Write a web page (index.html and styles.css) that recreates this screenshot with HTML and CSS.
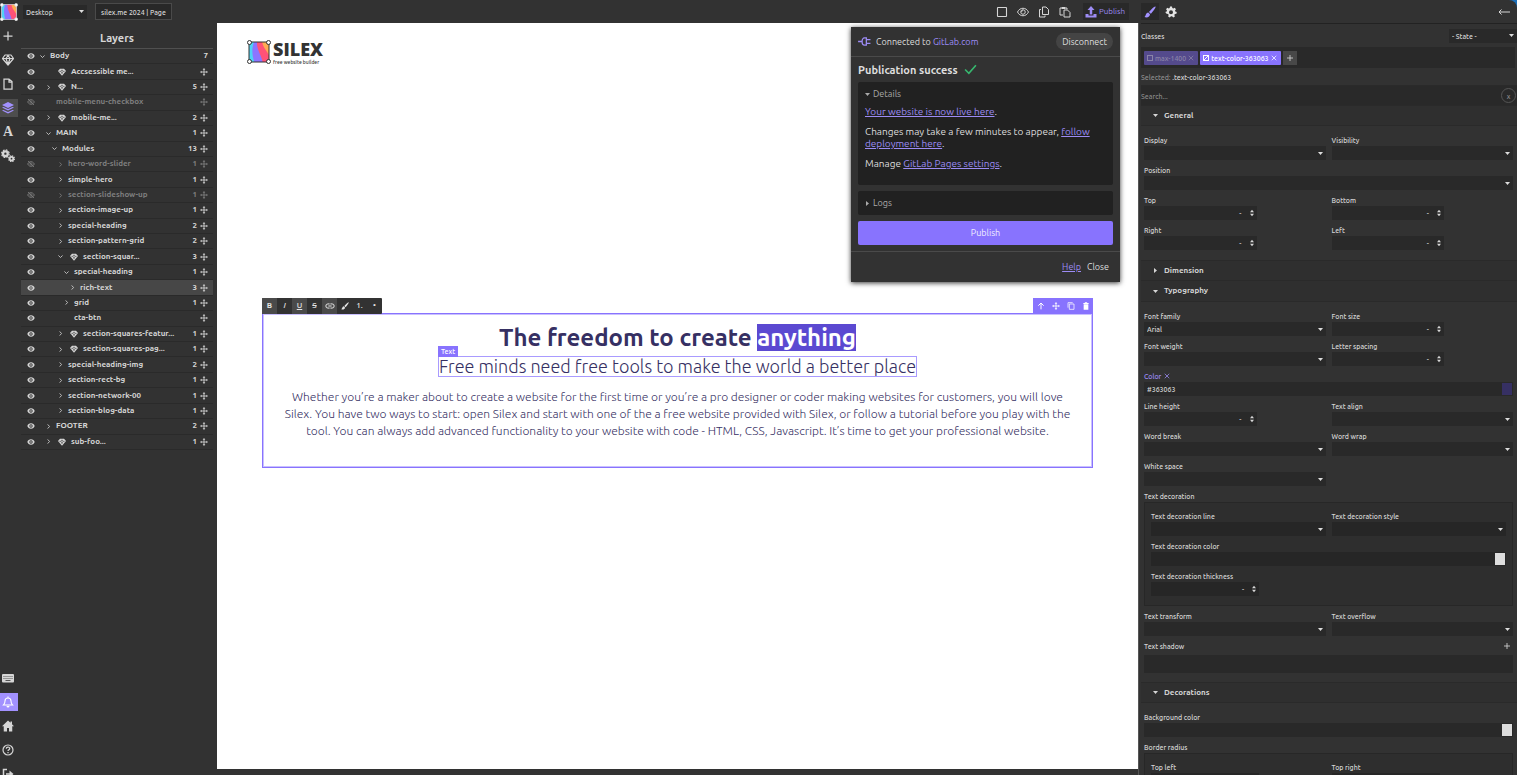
FILE: index.html
```html
<!DOCTYPE html>
<html lang="en">
<head>
<meta charset="utf-8">
<title>silex.me 2024 | Page</title>
<link rel="stylesheet" href="styles.css">
</head>
<body>
<svg class="defs" aria-hidden="true">
  <defs>
    <clipPath id="sq"><rect x="2" y="2" width="20" height="20"/></clipPath>
    <symbol id="logo" viewBox="0 0 24 24">
      <g clip-path="url(#sq)">
        <rect width="24" height="24" fill="#8c74ff"/>
        <path d="M0 0h8C4 7 5 17 8 24H0z" fill="#4fd3f5"/>
        <path d="M10 0h14v24h-8C15 15 9 10 10 0z" fill="#ff5277"/>
        <path d="M15 0h9v20C22 12 15 8 15 0z" fill="#ffab52"/>
      </g>
      <g fill="none" stroke="currentColor" stroke-width="1"><rect x="2" y="2" width="20" height="20"/></g>
      <g fill="#fff" stroke="currentColor" stroke-width="1"><circle cx="2.500" cy="2.500" r="2"/><circle cx="21.500" cy="2.500" r="2"/><circle cx="2.500" cy="21.500" r="2"/><circle cx="21.500" cy="21.500" r="2"/></g>
    </symbol>
    <symbol id="eye" viewBox="0 0 24 24"><path fill-rule="evenodd" d="M12 4C6.500 4 2.500 7.500 1 12c1.500 4.500 5.500 8 11 8s9.500-3.500 11-8c-1.500-4.500-5.500-8-11-8zm0 13a5 5 0 1 1 0-10 5 5 0 0 1 0 10zm0-2.500a2.500 2.500 0 1 0 0-5 2.500 2.500 0 0 0 0 5z" fill="currentColor"/></symbol>
    <symbol id="eyeoff" viewBox="0 0 24 24"><path d="M2 12c2-4.500 6-7 10-7s8 2.500 10 7c-2 4.500-6 7-10 7s-8-2.500-10-7zM3 3l18 18" fill="none" stroke="currentColor" stroke-width="2.500"/><circle cx="12" cy="12" r="3.500" fill="none" stroke="currentColor" stroke-width="2"/></symbol>
    <symbol id="right" viewBox="0 0 24 24"><path d="M8 2l9 10-9 10" fill="none" stroke="currentColor" stroke-width="4"/></symbol>
    <symbol id="down" viewBox="0 0 24 24"><path d="M2 7l10 10L22 7" fill="none" stroke="currentColor" stroke-width="4"/></symbol>
    <symbol id="gem" viewBox="0 0 24 24"><path d="M6 2h12l6 7-12 14L0 9z" fill="currentColor"/><path d="M4 10h5l3 7 3-7h5M9 9.500l3-4 3 4" fill="none" stroke="#333" stroke-width="1.600"/></symbol>
    <symbol id="gemline" viewBox="0 0 24 24"><path d="M6 2h12l5 7-11 13L1 9zM2 9h20M12 21L8 9l4-6 4 6z" fill="none" stroke="currentColor" stroke-width="2.400" stroke-linejoin="round"/></symbol>
    <symbol id="move" viewBox="0 0 24 24"><path d="M12 4v16M4 12h16" stroke="currentColor" stroke-width="2.500"/><path d="M12 0l4 5H8zM12 24l4-5H8zM0 12l5-4v8zM24 12l-5-4v8z" fill="currentColor"/></symbol>
    <symbol id="plus" viewBox="0 0 24 24"><path d="M12 3v18M3 12h18" stroke="currentColor" stroke-width="2.500"/></symbol>
    <symbol id="page" viewBox="0 0 24 24"><path d="M4 2h10l6 5v15H4zM14 2v6h6" fill="none" stroke="currentColor" stroke-width="2.500"/></symbol>
    <symbol id="layers" viewBox="0 0 24 24"><path d="M12 0l12 6-12 6L0 6zM0 11l3-1 9 4 9-4 3 1-12 6zM0 17l3-1 9 4 9-4 3 1-12 6z" fill="currentColor"/></symbol>
    <symbol id="gears" viewBox="0 0 24 24"><circle cx="7.500" cy="8" r="4" fill="none" stroke="currentColor" stroke-width="4"/><circle cx="7.500" cy="8" r="6.500" fill="none" stroke="currentColor" stroke-width="2" stroke-dasharray="3 2.100"/><circle cx="18" cy="16.500" r="3" fill="none" stroke="currentColor" stroke-width="3"/><circle cx="18" cy="16.500" r="5" fill="none" stroke="currentColor" stroke-width="2" stroke-dasharray="2.400 1.500"/></symbol>
    <symbol id="gear" viewBox="0 0 24 24"><path fill-rule="evenodd" d="M10 1h4l.6 3.200 2 .9L19.400 3.300l2.500 3-1.900 2.500.6 2L23.500 12l-.6 3.700-3.200.5-1 1.700 1.100 3-3.300 2-2.400-2.200h-2.200L9.500 23l-3.300-2 1.100-3-1-1.800-3.200-.5L.5 12l2.900-1.200.6-2-1.900-2.500 2.500-3 2.800 1.800 2-.9zM12 8.300a4 4 0 1 0 0 8 4 4 0 0 0 0-8z" fill="currentColor"/></symbol>
    <symbol id="keyboard" viewBox="0 0 24 24"><rect x="0" y="4" width="24" height="17" rx="2" fill="currentColor"/><path d="M3 9h18M3 13h18" stroke="#333" stroke-width="1.600" stroke-dasharray="2 2"/><path d="M7 17h10" stroke="#333" stroke-width="1.600"/></symbol>
    <symbol id="bell" viewBox="0 0 24 24"><path d="M3 18c2-2 3-4 3-8a6 6 0 0 1 12 0c0 4 1 6 3 8zM12 1v3" fill="none" stroke="currentColor" stroke-width="2.200"/><path d="M9 20h6a3 3 0 0 1-6 0z" fill="currentColor"/></symbol>
    <symbol id="home" viewBox="0 0 24 24"><path d="M12 1L0 12.500h3.500V23H10v-7h4v7h6.500V12.500H24l-4-4V3h-3v2.500z" fill="currentColor"/></symbol>
    <symbol id="help" viewBox="0 0 24 24"><circle cx="12" cy="12" r="10" fill="none" stroke="currentColor" stroke-width="2.400"/><path d="M8.500 9.500c0-4.500 7-4.500 7-.5 0 2.500-3.500 2.500-3.500 5M12 16v2.500" fill="none" stroke="currentColor" stroke-width="2.400"/></symbol>
    <symbol id="exit" viewBox="0 0 24 24"><path d="M10 3H3v18h7M8 12h9" fill="none" stroke="currentColor" stroke-width="3"/><path d="M15 5l8 7-8 7z" fill="currentColor"/></symbol>
    <symbol id="square" viewBox="0 0 24 24"><rect x="3" y="3" width="18" height="18" rx="1" fill="none" stroke="currentColor" stroke-width="2.200"/></symbol>
    <symbol id="view" viewBox="0 0 24 24"><path d="M1 12c2.500-5 6.500-7.500 11-7.500S20.500 7 23 12c-2.500 5-6.500 7.500-11 7.500S3.500 17 1 12z" fill="none" stroke="currentColor" stroke-width="2"/><circle cx="12" cy="12" r="4.500" fill="none" stroke="currentColor" stroke-width="2"/><path d="M9 12a3 3 0 0 1 3-3" fill="none" stroke="currentColor" stroke-width="1.500"/></symbol>
    <symbol id="copy" viewBox="0 0 24 24"><path d="M9 2h7l5 5v10H9zM6 7H3v15h11v-3" fill="none" stroke="currentColor" stroke-width="2"/></symbol>
    <symbol id="paste" viewBox="0 0 24 24"><path d="M8 18H2V4h3M13 4h3v3M10 8h7l5 5v9H10z" fill="none" stroke="currentColor" stroke-width="2"/><path d="M5 2h8v4H5z" fill="currentColor"/></symbol>
    <symbol id="upload" viewBox="0 0 24 24"><path d="M12 0l7 8h-4.500v9h-5V8H5zM1 16h6v3h10v-3h6v7H1z" fill="currentColor"/></symbol>
    <symbol id="brush" viewBox="0 0 24 24"><path d="M23 1c1.500 1.500-6 12-9.500 14.500L10 12C13 8 21.500-.5 23 1zM8.500 13l3.500 3.500C12 22 6 24 1 22c3-1.500 2-8.500 7.500-9z" fill="currentColor"/></symbol>
    <symbol id="back" viewBox="0 0 24 24"><path d="M24 12H2M7 7l-5 5 5 5" fill="none" stroke="currentColor" stroke-width="2"/></symbol>
    <symbol id="plug" viewBox="0 0 28 24"><path d="M0 12h9M18 8h9M18 16h9M18 4h-4c-7 0-7 16 0 16h4z" fill="none" stroke="currentColor" stroke-width="2.800"/></symbol>
    <symbol id="check" viewBox="0 0 24 24"><path d="M2 12l7 7L22 4" fill="none" stroke="currentColor" stroke-width="3"/></symbol>
    <symbol id="spin" viewBox="0 0 10 16"><path d="M5 0l5 6H0zM5 16l5-6H0z" fill="currentColor"/></symbol>
    <symbol id="x" viewBox="0 0 24 24"><path d="M3 3l18 18M21 3L3 21" stroke="currentColor" stroke-width="3"/></symbol>
    <symbol id="link" viewBox="0 0 24 24"><path d="M11 7H7a5 5 0 0 0 0 10h4M13 7h4a5 5 0 0 1 0 10h-4M8 12h8" fill="none" stroke="currentColor" stroke-width="2.400"/></symbol>
    <symbol id="up" viewBox="0 0 24 24"><path d="M12 22V4M4 11l8-8 8 8" fill="none" stroke="currentColor" stroke-width="3"/></symbol>
    <symbol id="clone" viewBox="0 0 24 24"><path d="M17 2H3v15M7 6h14v16H7z" fill="none" stroke="currentColor" stroke-width="2.200"/></symbol>
    <symbol id="trash" viewBox="0 0 24 24"><path d="M9 1h6l1 2h4v3H4V3h4zM5 7h14v16H5z" fill="currentColor"/></symbol>
    <symbol id="tdown" viewBox="0 0 10 10"><path d="M0 2h10L5 8z" fill="currentColor"/></symbol>
    <symbol id="tright" viewBox="0 0 10 10"><path d="M2 0v10l6-5z" fill="currentColor"/></symbol>
  </defs>
</svg>

<div class="app">
  <header class="topbar">
    <svg class="brand"><use href="#logo"/></svg>
    <select class="select device" aria-label="Device"><option>Desktop</option></select>
    <button class="page-name">silex.me 2024 | Page</button>
    <div class="actions">
      <button aria-label="Outline"><svg class="i12"><use href="#square"/></svg></button>
      <button aria-label="Preview"><svg class="i12"><use href="#view"/></svg></button>
      <button aria-label="Copy"><svg class="i12"><use href="#copy"/></svg></button>
      <button aria-label="Paste"><svg class="i12"><use href="#paste"/></svg></button>
      <button class="publish-top"><svg class="i12"><use href="#upload"/></svg>Publish</button>
    </div>
    <div class="side-tabs">
      <button class="tab on" aria-label="Styles"><svg class="i12"><use href="#brush"/></svg></button>
      <button class="tab" aria-label="Settings"><svg class="i12"><use href="#gear"/></svg></button>
      <button class="back" aria-label="Back"><svg class="i12"><use href="#back"/></svg></button>
    </div>
  </header>

  <nav class="rail">
    <button aria-label="Add"><svg class="i12"><use href="#plus"/></svg></button>
    <button aria-label="Symbols"><svg class="i12"><use href="#gemline"/></svg></button>
    <button aria-label="Pages"><svg class="i12"><use href="#page"/></svg></button>
    <button class="on" aria-label="Layers"><svg class="i12"><use href="#layers"/></svg></button>
    <button class="letter" aria-label="Fonts">A</button>
    <button aria-label="Settings"><svg class="i14"><use href="#gears"/></svg></button>
    <div class="rail-end">
      <button aria-label="Shortcuts"><svg class="i12"><use href="#keyboard"/></svg></button>
      <button class="alert" aria-label="Notifications"><svg class="i12"><use href="#bell"/></svg></button>
      <button aria-label="Home"><svg class="i12"><use href="#home"/></svg></button>
      <button aria-label="Help"><svg class="i12"><use href="#help"/></svg></button>
      <button aria-label="Sign out"><svg class="i12"><use href="#exit"/></svg></button>
    </div>
  </nav>

  <aside class="layers">
    <h2>Layers</h2>
    <ul class="tree">
      <li><svg class="eye"><use href="#eye"/></svg><svg class="car"><use href="#down"/></svg><span class="n">Body</span><span class="c last">7</span></li>
      <li class="d1"><svg class="eye"><use href="#eye"/></svg><i class="car"></i><svg class="gem"><use href="#gem"/></svg><span class="n">Accsessible me...</span><svg class="mv"><use href="#move"/></svg></li>
      <li class="d1"><svg class="eye"><use href="#eye"/></svg><svg class="car"><use href="#right"/></svg><svg class="gem"><use href="#gem"/></svg><span class="n">N...</span><span class="c">5</span><svg class="mv"><use href="#move"/></svg></li>
      <li class="d1 off"><svg class="eye"><use href="#eyeoff"/></svg><i class="car"></i><span class="n">mobile-menu-checkbox</span><svg class="mv"><use href="#move"/></svg></li>
      <li class="d1"><svg class="eye"><use href="#eye"/></svg><svg class="car"><use href="#right"/></svg><svg class="gem"><use href="#gem"/></svg><span class="n">mobile-me...</span><span class="c">2</span><svg class="mv"><use href="#move"/></svg></li>
      <li class="d1"><svg class="eye"><use href="#eye"/></svg><svg class="car"><use href="#down"/></svg><span class="n">MAIN</span><span class="c">1</span><svg class="mv"><use href="#move"/></svg></li>
      <li class="d2"><svg class="eye"><use href="#eye"/></svg><svg class="car"><use href="#down"/></svg><span class="n">Modules</span><span class="c">13</span><svg class="mv"><use href="#move"/></svg></li>
      <li class="d3 off"><svg class="eye"><use href="#eyeoff"/></svg><svg class="car"><use href="#right"/></svg><span class="n">hero-word-slider</span><span class="c">1</span><svg class="mv"><use href="#move"/></svg></li>
      <li class="d3"><svg class="eye"><use href="#eye"/></svg><svg class="car"><use href="#right"/></svg><span class="n">simple-hero</span><span class="c">1</span><svg class="mv"><use href="#move"/></svg></li>
      <li class="d3 off"><svg class="eye"><use href="#eyeoff"/></svg><svg class="car"><use href="#right"/></svg><span class="n">section-slideshow-up</span><span class="c">1</span><svg class="mv"><use href="#move"/></svg></li>
      <li class="d3"><svg class="eye"><use href="#eye"/></svg><svg class="car"><use href="#right"/></svg><span class="n">section-image-up</span><span class="c">1</span><svg class="mv"><use href="#move"/></svg></li>
      <li class="d3"><svg class="eye"><use href="#eye"/></svg><svg class="car"><use href="#right"/></svg><span class="n">special-heading</span><span class="c">2</span><svg class="mv"><use href="#move"/></svg></li>
      <li class="d3"><svg class="eye"><use href="#eye"/></svg><svg class="car"><use href="#right"/></svg><span class="n">section-pattern-grid</span><span class="c">2</span><svg class="mv"><use href="#move"/></svg></li>
      <li class="d3"><svg class="eye"><use href="#eye"/></svg><svg class="car"><use href="#down"/></svg><svg class="gem"><use href="#gem"/></svg><span class="n">section-squar...</span><span class="c">3</span><svg class="mv"><use href="#move"/></svg></li>
      <li class="d4"><svg class="eye"><use href="#eye"/></svg><svg class="car"><use href="#down"/></svg><span class="n">special-heading</span><span class="c">1</span><svg class="mv"><use href="#move"/></svg></li>
      <li class="d5 sel"><svg class="eye"><use href="#eye"/></svg><svg class="car"><use href="#right"/></svg><span class="n">rich-text</span><span class="c">3</span><svg class="mv"><use href="#move"/></svg></li>
      <li class="d4"><svg class="eye"><use href="#eye"/></svg><svg class="car"><use href="#right"/></svg><span class="n">grid</span><span class="c">1</span><svg class="mv"><use href="#move"/></svg></li>
      <li class="d4"><svg class="eye"><use href="#eye"/></svg><i class="car"></i><span class="n">cta-btn</span><svg class="mv"><use href="#move"/></svg></li>
      <li class="d3"><svg class="eye"><use href="#eye"/></svg><svg class="car"><use href="#right"/></svg><svg class="gem"><use href="#gem"/></svg><span class="n">section-squares-featur...</span><span class="c">1</span><svg class="mv"><use href="#move"/></svg></li>
      <li class="d3"><svg class="eye"><use href="#eye"/></svg><svg class="car"><use href="#right"/></svg><svg class="gem"><use href="#gem"/></svg><span class="n">section-squares-pag...</span><span class="c">1</span><svg class="mv"><use href="#move"/></svg></li>
      <li class="d3"><svg class="eye"><use href="#eye"/></svg><svg class="car"><use href="#right"/></svg><span class="n">special-heading-img</span><span class="c">2</span><svg class="mv"><use href="#move"/></svg></li>
      <li class="d3"><svg class="eye"><use href="#eye"/></svg><svg class="car"><use href="#right"/></svg><span class="n">section-rect-bg</span><span class="c">1</span><svg class="mv"><use href="#move"/></svg></li>
      <li class="d3"><svg class="eye"><use href="#eye"/></svg><svg class="car"><use href="#right"/></svg><span class="n">section-network-00</span><span class="c">1</span><svg class="mv"><use href="#move"/></svg></li>
      <li class="d3"><svg class="eye"><use href="#eye"/></svg><svg class="car"><use href="#right"/></svg><span class="n">section-blog-data</span><span class="c">1</span><svg class="mv"><use href="#move"/></svg></li>
      <li class="d1"><svg class="eye"><use href="#eye"/></svg><svg class="car"><use href="#right"/></svg><span class="n">FOOTER</span><span class="c">2</span><svg class="mv"><use href="#move"/></svg></li>
      <li class="d1"><svg class="eye"><use href="#eye"/></svg><svg class="car"><use href="#right"/></svg><svg class="gem"><use href="#gem"/></svg><span class="n">sub-foo...</span><span class="c">1</span><svg class="mv"><use href="#move"/></svg></li>
    </ul>
  </aside>

  <main class="canvas">
    <div class="site-logo">
      <svg class="site-mark"><use href="#logo"/></svg>
      <div><div class="site-name">SILEX</div><div class="site-tag">free website builder</div></div>
    </div>
    <section class="block">
      <div class="rte">
        <button class="lit"><b>B</b></button><button><em>I</em></button><button class="lit"><u>U</u></button><button><s>S</s></button><button class="lit" aria-label="Link"><svg class="i10"><use href="#link"/></svg></button><button aria-label="Style"><svg class="i8"><use href="#brush"/></svg></button><button>1.</button><button>•</button>
      </div>
      <div class="tools">
        <button aria-label="Select parent"><svg class="i8"><use href="#up"/></svg></button><button aria-label="Move"><svg class="i8"><use href="#move"/></svg></button><button aria-label="Duplicate"><svg class="i8"><use href="#clone"/></svg></button><button aria-label="Delete"><svg class="i8"><use href="#trash"/></svg></button>
      </div>
      <h1>The freedom to create <mark>anything</mark></h1>
      <div class="sub"><span class="badge">Text</span>Free minds need free tools to make the world a better place</div>
      <p>Whether you’re a maker about to create a website for the first time or you’re a pro designer or coder making websites for customers, you will love<br>Silex. You have two ways to start: open Silex and start with one of the a free website provided with Silex, or follow a tutorial before you play with the<br>tool. You can always add advanced functionality to your website with code - HTML, CSS, Javascript. It’s time to get your professional website.</p>
    </section>

    <div class="dialog" role="dialog" aria-label="Publication">
      <div class="dialog-head"><svg class="plug"><use href="#plug"/></svg><span>Connected to <a href="#">GitLab.com</a></span><button class="pill">Disconnect</button></div>
      <div class="dialog-body">
        <h3>Publication success <svg class="check"><use href="#check"/></svg></h3>
        <details open>
          <summary><svg class="tri"><use href="#tdown"/></svg>Details</summary>
          <p><a class="ul" href="#">Your website is now live here</a>.</p>
          <p>Changes may take a few minutes to appear, <a class="ul" href="#">follow deployment here</a>.</p>
          <p>Manage <a class="ul" href="#">GitLab Pages settings</a>.</p>
        </details>
        <details class="logs"><summary><svg class="tri"><use href="#tright"/></svg>Logs</summary></details>
        <button class="publish">Publish</button>
      </div>
      <div class="dialog-foot"><a class="ul" href="#">Help</a><button>Close</button></div>
    </div>
  </main>

  <aside class="styles">
    <div class="classes-head"><span>Classes</span><select class="select state" aria-label="State"><option>- State -</option></select></div>
    <div class="tags">
      <span class="tag dim"><input type="checkbox" id="t1"><label for="t1">max-1400</label><svg class="i6"><use href="#x"/></svg></span>
      <span class="tag"><input type="checkbox" id="t2" checked><label for="t2">text-color-363063</label><svg class="i6"><use href="#x"/></svg></span>
      <button class="add" aria-label="Add class"><svg class="i8"><use href="#plus"/></svg></button>
    </div>
    <div class="selected"><span>Selected:</span> .text-color-363063</div>
    <div class="search"><input type="text" placeholder="Search..." aria-label="Search"><button>x</button></div>

    <h4 class="sector"><svg class="tri"><use href="#tdown"/></svg>General</h4>
    <div class="props">
      <div class="field"><label for="f1">Display</label><select class="select" id="f1"></select></div>
      <div class="field"><label for="f2">Visibility</label><select class="select" id="f2"></select></div>
      <div class="field wide"><label for="f3">Position</label><select class="select" id="f3"></select></div>
      <div class="field"><label for="f4">Top</label><span class="num"><input id="f4" type="text"><span>-</span><svg><use href="#spin"/></svg></span></div>
      <div class="field"><label for="f5">Bottom</label><span class="num"><input id="f5" type="text"><span>-</span><svg><use href="#spin"/></svg></span></div>
      <div class="field"><label for="f6">Right</label><span class="num"><input id="f6" type="text"><span>-</span><svg><use href="#spin"/></svg></span></div>
      <div class="field"><label for="f7">Left</label><span class="num"><input id="f7" type="text"><span>-</span><svg><use href="#spin"/></svg></span></div>
    </div>
    <h4 class="sector"><svg class="tri"><use href="#tright"/></svg>Dimension</h4>
    <h4 class="sector"><svg class="tri"><use href="#tdown"/></svg>Typography</h4>
    <div class="props">
      <div class="field"><label for="g1">Font family</label><select class="select" id="g1"><option>Arial</option></select></div>
      <div class="field"><label for="g2">Font size</label><span class="num"><input id="g2" type="text"><span>-</span><svg><use href="#spin"/></svg></span></div>
      <div class="field"><label for="g3">Font weight</label><select class="select" id="g3"></select></div>
      <div class="field"><label for="g4">Letter spacing</label><span class="num"><input id="g4" type="text"><span>-</span><svg><use href="#spin"/></svg></span></div>
      <div class="field wide set"><label for="g5">Color <svg class="i6"><use href="#x"/></svg></label><span class="color"><input id="g5" type="text" value="#363063"><input type="color" value="#363063" aria-label="Pick color"></span></div>
      <div class="field"><label for="g6">Line height</label><span class="num"><input id="g6" type="text"><span>-</span><svg><use href="#spin"/></svg></span></div>
      <div class="field"><label for="g7">Text align</label><select class="select" id="g7"></select></div>
      <div class="field"><label for="g8">Word break</label><select class="select" id="g8"></select></div>
      <div class="field"><label for="g9">Word wrap</label><select class="select" id="g9"></select></div>
      <div class="field"><label for="g10">White space</label><select class="select" id="g10"></select></div>
      <fieldset class="group">
        <legend>Text decoration</legend>
        <div class="group-box">
          <div class="field"><label for="h1">Text decoration line</label><select class="select" id="h1"></select></div>
          <div class="field"><label for="h2">Text decoration style</label><select class="select" id="h2"></select></div>
          <div class="field wide"><label for="h3">Text decoration color</label><span class="color"><input id="h3" type="text"><input type="color" value="#dddddd" aria-label="Pick color"></span></div>
          <div class="field"><label for="h4">Text decoration thickness</label><span class="num"><input id="h4" type="text"><span>-</span><svg><use href="#spin"/></svg></span></div>
        </div>
      </fieldset>
      <div class="field"><label for="k1">Text transform</label><select class="select" id="k1"></select></div>
      <div class="field"><label for="k2">Text overflow</label><select class="select" id="k2"></select></div>
      <div class="field wide stacked"><div class="stack-head"><span>Text shadow</span><button aria-label="Add shadow"><svg class="i8"><use href="#plus"/></svg></button></div><div class="stack"></div></div>
    </div>
    <h4 class="sector"><svg class="tri"><use href="#tdown"/></svg>Decorations</h4>
    <div class="props">
      <div class="field wide"><label for="m1">Background color</label><span class="color"><input id="m1" type="text"><input type="color" value="#dddddd" aria-label="Pick color"></span></div>
      <fieldset class="group">
        <legend>Border radius</legend>
        <div class="group-box">
          <div class="field"><label for="m2">Top left</label><span class="num"><input id="m2" type="text"></span></div>
          <div class="field"><label for="m3">Top right</label><span class="num"><input id="m3" type="text"></span></div>
        </div>
      </fieldset>
    </div>
  </aside>
</div>
</body>
</html>
```
FILE: styles.css
```css
:root {
  --bg: #323232;
  --field: #292929;
  --line: #2a2a2a;
  --text: #d6d6d6;
  --accent: #8873fe;
}

* { box-sizing: border-box; }

html { background: #1c6fb8; }

body {
  margin: 0;
  color: var(--text);
  font: 500 7px/12px Ubuntu, "Open Sans", sans-serif;
}

button, input, select {
  margin: 0;
  padding: 0;
  border: 0;
  border-radius: 0;
  background: none;
  color: inherit;
  font: inherit;
}

button { display: flex; align-items: center; justify-content: center; }
h1, h2, h3, h4, p, ul, fieldset { margin: 0; padding: 0; border: 0; }
svg { display: block; flex: none; }
.defs { position: absolute; width: 0; height: 0; }

.i6 { width: 6px; height: 6px; }
.i8 { width: 8px; height: 8px; }
.i10 { width: 10px; height: 10px; }
.i12 { width: 12px; height: 12px; }
.i14 { width: 14px; height: 14px; }

.app {
  display: grid;
  grid-template-columns: 21px 196px 1fr 379px;
  grid-template-rows: 23px minmax(0, 1fr);
  height: 100vh;
  overflow: hidden;
  background: var(--bg);
  border-top-right-radius: 8px;
}

/* Top bar */
.topbar { grid-column: 1 / -1; display: flex; align-items: center; }
.brand { width: 18px; height: 18px; color: #ccc; margin-right: 5px; }

.select {
  appearance: none;
  width: 100%;
  height: 14px;
  padding: 0 3px;
  background: var(--field) url("data:image/svg+xml,%3Csvg xmlns='http://www.w3.org/2000/svg' viewBox='0 0 10 6'%3E%3Cpath d='M0 0h10L5 6z' fill='%23ddd'/%3E%3C/svg%3E") no-repeat right 3px center / 5px 3px;
}

.topbar .device { width: 64px; margin-right: 8px; }
.page-name { height: 17px; padding: 0 5px; border: 1px solid #4a4a4a; background: #282828; }
.actions { display: flex; align-items: center; gap: 9px; margin-left: auto; margin-right: 9px; }
.publish-top { height: 17px; padding: 0 4px 0 2px; gap: 2px; background: #292929; color: #9d8cf5; font-size: 8px; font-weight: 400; margin-left: 3px; }
.side-tabs { display: flex; align-items: center; width: 379px; padding: 0 7px 0 3px; gap: 3px; }
.tab { width: 18px; height: 17px; color: #e4e4e4; }
.tab.on { background: #292929; color: #a291ff; }
.back { margin-left: auto; }

/* Left icon rail */
.rail { display: flex; flex-direction: column; gap: 6px; padding-top: 4px; overflow: hidden; }
.rail button { flex: none; width: 18px; height: 18px; padding-right: 2px; }
.rail .on { background: #4d4d4d; color: #a291ff; }
.rail .alert { background: #a291ff; color: #fff; }
.rail .letter { font: 900 14px/18px "Liberation Serif", serif; }
.rail-end { display: flex; flex-direction: column; gap: 6px; margin-top: auto; margin-bottom: -8px; }

/* Layer tree */
.layers { padding-right: 4px; }
.layers h2 { height: 26px; border-bottom: 1px solid #505050; font-size: 11px; font-weight: 700; line-height: 30px; text-align: center; }
.tree { display: grid; grid-auto-rows: 1fr; min-height: 401px; list-style: none; font-size: 8px; font-weight: 600; }
.tree li { display: flex; align-items: center; padding: 0 5px 0 6px; border-bottom: 1px solid var(--line); }
.tree .sel { background: #474747; }
.tree .off { color: #7f7f7f; }
.eye { width: 8px; height: 8px; margin-right: 5px; }
.car { width: 5px; height: 5px; margin-right: 5px; }
.gem { width: 8px; height: 8px; margin: 0 5px 0 2px; }
.mv { width: 8px; height: 8px; }
.n { flex: 1; white-space: nowrap; }
.c { width: 14px; margin-right: 3px; text-align: right; }
.c.last { margin-right: 0; }
.d1 .car { margin-left: 6px; }
.d2 .car { margin-left: 12px; }
.d3 .car { margin-left: 18px; }
.d4 .car { margin-left: 24px; }
.d5 .car { margin-left: 30px; }

/* Canvas */
.canvas { position: relative; margin-bottom: 6px; background: #fff; color: #363063; }
.site-logo { display: flex; align-items: center; gap: 2px; padding: 16px 0 0 30px; color: #333; }
.site-mark { width: 24px; height: 26px; }
.site-name { font: 800 18px/20px "Open Sans", sans-serif; }
.site-tag { font-size: 5px; line-height: 6px; }

.block {
  position: relative;
  margin: 248px 45px 0;
  padding: 10px 0 28px;
  border: 1px solid var(--accent);
  outline: 1px solid #c9c0ff;
  outline-offset: -2px;
  text-align: center;
}
.block h1 { font-size: 24px; font-weight: 700; line-height: 27px; }
.block mark { display: inline-block; background: #5b49d1; color: #fff; }
.sub { position: relative; width: max-content; margin: 5px auto 11px; border: 1px solid #a99bff; font-size: 18px; font-weight: 300; line-height: 19px; }
.badge { position: absolute; left: -1px; bottom: 100%; padding: 0 3px; background: var(--accent); color: #fff; font-size: 7px; font-weight: 500; line-height: 11px; }
.block p { font-size: 12px; font-weight: 300; line-height: 17px; white-space: nowrap; display: grid; justify-content: center; }

.rte, .tools { position: absolute; bottom: 100%; display: flex; height: 16px; color: #e4e4e4; font-size: 8px; }
.rte { left: -1px; background: #323232; border-radius: 1px; overflow: hidden; }
.rte button, .tools button { width: 15px; }
.rte .lit { background: #4a4a4a; }
.tools { right: -1px; background: var(--accent); color: #fff; }

/* Publication dialog */
.dialog {
  position: absolute;
  top: 4px;
  right: 18px;
  width: 269px;
  background: #323232;
  color: #dedede;
  box-shadow: 0 1px 5px rgba(0, 0, 0, .8);
  font-size: 9px;
  font-weight: 400;
}
.dialog a { color: #9d8cf5; text-decoration: none; }
.dialog a.ul { text-decoration: underline; }
.dialog-head { display: flex; align-items: center; gap: 5px; height: 30px; padding: 0 7px; border-bottom: 1px solid #4a4a4a; }
.plug { width: 13px; height: 11px; color: #9d8cf5; }
.pill { height: 17px; margin-left: auto; padding: 0 6px; border-radius: 9px; background: #444; }
.dialog-body { padding: 0 7px; }
.dialog-body h3 { display: flex; align-items: center; gap: 6px; height: 25px; font-size: 11px; }
.check { width: 13px; height: 13px; color: #37b86f; }
.dialog details { min-height: 103px; margin-bottom: 6px; padding: 6px 7px; border-radius: 2px; background: #212121; }
.dialog details.logs { min-height: 24px; }
.dialog summary { display: flex; align-items: center; gap: 3px; list-style: none; color: #aaa; }
.tri { width: 5px; height: 5px; }
.dialog p { margin: 6px 0 8px; font-size: 10px; line-height: 12px; }
.dialog p + p { margin-top: 0; }
.publish { width: 100%; height: 24px; margin-bottom: 6px; border-radius: 2px; background: var(--accent); color: #f1efff; }
.dialog-foot { display: flex; align-items: center; justify-content: flex-end; gap: 6px; height: 31px; padding-right: 11px; border-top: 1px solid #4a4a4a; }

/* Style panel */
.styles { padding-left: 2px; border-left: 1px solid #555; overflow: hidden; }
.classes-head { display: flex; align-items: center; justify-content: space-between; height: 24px; border-top: 1px solid #222; }
.select.state { width: 68px; }
.tags { display: flex; align-items: center; gap: 2px; height: 21px; padding-left: 3px; margin-right: 2px; background: var(--field); }
.tag { display: flex; align-items: center; gap: 2px; height: 14px; padding: 0 4px 0 3px; border-radius: 1px; background: var(--accent); color: #fff; }
.tag.dim { background: #544a8c; color: #8a84a8; }
.tag input { appearance: none; width: 6px; height: 6px; border: 1px solid currentColor; }
.tag input:checked { background: linear-gradient(135deg, transparent 40%, #fff 40% 60%, transparent 60%); }
.add { width: 14px; height: 14px; background: #484848; }
.selected { height: 18px; line-height: 18px; border-bottom: 1px solid var(--line); }
.selected span { color: #8c8c8c; }
.search { display: flex; align-items: center; height: 19px; background: var(--field); }
.search input { flex: 1; }
.search input::placeholder { color: #888; }
.search button { width: 15px; height: 15px; margin-right: 1px; border: 1px solid #555; border-radius: 50%; color: #888; }

.sector { display: flex; align-items: center; gap: 6px; height: 21px; padding-left: 12px; border-top: 1px solid var(--line); border-bottom: 1px solid var(--line); background: #2f2f2f; font-size: 8px; font-weight: 600; }
.sector + .sector { border-top: 0; }

.props, .group-box { display: grid; grid-template-columns: 1fr 1fr; column-gap: 6px; }
.props { padding: 8px 4px 6px 3px; }
.field { display: flex; flex-direction: column; min-width: 0; height: 30px; }
.field label { display: flex; align-items: center; gap: 3px; line-height: 12px; }
.wide, .group { grid-column: 1 / -1; }
.set label { color: #9d8cf5; }
.num { display: flex; align-items: center; gap: 8px; width: 62%; height: 14px; padding-right: 3px; background: var(--field); }
.num input { flex: 1; width: 0; height: 14px; }
.num svg { width: 4px; height: 8px; }
.color { display: flex; align-items: center; height: 14px; padding: 0 1px 0 3px; background: var(--field); }
.color input[type="text"] { flex: 1; width: 0; }
.color input[type="color"] { appearance: none; width: 10px; height: 12px; }
.color input[type="color"]::-webkit-color-swatch-wrapper { padding: 0; }
.color input[type="color"]::-webkit-color-swatch { border: 0; }

.group { min-width: 0; margin-bottom: 4px; }
.group legend { padding: 0; line-height: 12px; }
.group-box { padding: 7px 6px 5px; border: 1px solid #272727; background: #2e2e2e; }
.group-box .select, .group-box .num, .group-box .color { background-color: #262626; }
.stacked { height: 36px; }
.stack-head { display: flex; align-items: center; justify-content: space-between; height: 12px; padding-right: 2px; }
.stack { height: 18px; margin-top: 3px; background: var(--field); }
```
